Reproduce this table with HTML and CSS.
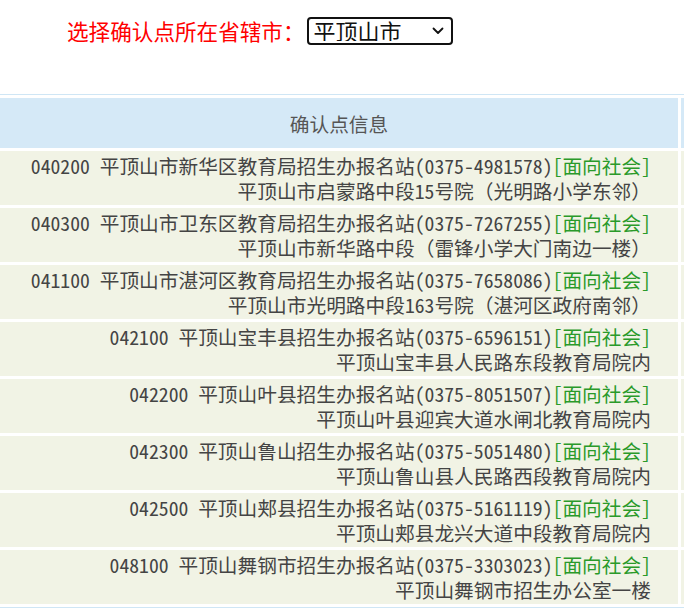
FILE: index.html
```
<!DOCTYPE html>
<html lang="zh-CN">
<head>
<meta charset="utf-8">
<title>确认点信息</title>
<link rel="stylesheet" href="styles.css">
</head>
<body>
<div class="picker">
  <label class="picker-label" for="city">选择确认点所在省辖市：</label>
  <span class="select-box">
    <select id="city" class="city-select">
      <option>平顶山市</option>
    </select>
    <svg class="chevron" width="12" height="8" viewBox="0 0 12 8"><path d="M1.5 1.5 L6 6 L10.5 1.5" fill="none" stroke="#111" stroke-width="1.8" stroke-linecap="round" stroke-linejoin="round"/></svg>
  </span>
</div>
<div class="table-wrap">
<table class="info">
  <colgroup><col class="col-main"><col class="col-extra"></colgroup>
  <thead>
    <tr><th class="head">确认点信息</th><th class="head extra"></th></tr>
  </thead>
  <tbody>
    <tr><td class="cell">040200 平顶山市新华区教育局招生办报名站(0375-4981578)<span class="tag">[面向社会]</span><br>平顶山市启蒙路中段15号院（光明路小学东邻）</td><td class="cell extra"></td></tr>
    <tr><td class="cell">040300 平顶山市卫东区教育局招生办报名站(0375-7267255)<span class="tag">[面向社会]</span><br>平顶山市新华路中段（雷锋小学大门南边一楼）</td><td class="cell extra"></td></tr>
    <tr><td class="cell">041100 平顶山市湛河区教育局招生办报名站(0375-7658086)<span class="tag">[面向社会]</span><br>平顶山市光明路中段163号院（湛河区政府南邻）</td><td class="cell extra"></td></tr>
    <tr><td class="cell">042100 平顶山宝丰县招生办报名站(0375-6596151)<span class="tag">[面向社会]</span><br>平顶山宝丰县人民路东段教育局院内</td><td class="cell extra"></td></tr>
    <tr><td class="cell">042200 平顶山叶县招生办报名站(0375-8051507)<span class="tag">[面向社会]</span><br>平顶山叶县迎宾大道水闸北教育局院内</td><td class="cell extra"></td></tr>
    <tr><td class="cell">042300 平顶山鲁山招生办报名站(0375-5051480)<span class="tag">[面向社会]</span><br>平顶山鲁山县人民路西段教育局院内</td><td class="cell extra"></td></tr>
    <tr><td class="cell">042500 平顶山郏县招生办报名站(0375-5161119)<span class="tag">[面向社会]</span><br>平顶山郏县龙兴大道中段教育局院内</td><td class="cell extra"></td></tr>
    <tr><td class="cell">048100 平顶山舞钢市招生办报名站(0375-3303023)<span class="tag">[面向社会]</span><br>平顶山舞钢市招生办公室一楼</td><td class="cell extra"></td></tr>
  </tbody>
</table>
</div>
</body>
</html>
```
FILE: styles.css
```
html, body {
  margin: 0;
  padding: 0;
  overflow: hidden;
  background: #ffffff;
}
body {
  font-family: "Noto Sans Mono CJK SC", "Noto Sans CJK SC", sans-serif;
}
.picker {
  display: flex;
  align-items: flex-start;
  height: 94px;
  box-sizing: border-box;
  padding: 17px 0 0 67px;
}
.picker-label {
  color: #ff0000;
  font-family: "Noto Sans CJK SC", sans-serif;
  font-size: 21.6px;
  font-weight: 400;
  line-height: 28px;
  margin-right: 2px;
}
.select-box {
  position: relative;
  display: inline-block;
}
.city-select {
  appearance: none;
  -webkit-appearance: none;
  width: 146px;
  height: 28px;
  box-sizing: border-box;
  border: 2px solid #111;
  border-radius: 4px;
  background: #fff;
  color: #111;
  font-family: "Noto Sans CJK SC", sans-serif;
  font-size: 22px;
  line-height: 22px;
  padding: 0 0 2px 5px;
  margin: 0;
}
.chevron {
  position: absolute;
  right: 9px;
  top: 10px;
  pointer-events: none;
}
.table-wrap {
  margin-left: -3px;
  width: 800px;
}
.info {
  table-layout: fixed;
  width: 787px;
  border-collapse: separate;
  border-spacing: 3px;
  border-top: 1px solid #cfe6f5;
  border-bottom: 1px solid #cfe6f5;
  font-size: 19.7px;
  color: #444;
}
.col-main {
  width: 678px;
}
.col-extra {
  width: 100px;
}
.head {
  background: #d5e9f7;
  height: 50px;
  padding: 0;
  font-weight: normal;
  color: #555;
  text-align: center;
  vertical-align: middle;
  line-height: 25px;
}
.cell {
  background: #f1f3e5;
  height: 54px;
  box-sizing: border-box;
  padding: 2px 27px 2px 0;
  text-align: right;
  line-height: 25px;
  white-space: nowrap;
}
.head.extra, .cell.extra {
  padding: 0;
}
.tag {
  color: #2a9a2a;
}
```
